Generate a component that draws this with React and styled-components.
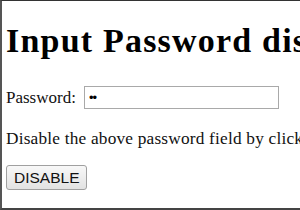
import React from "react";
import styled, { createGlobalStyle } from "styled-components";

const Global = createGlobalStyle`
  html, body { margin: 0; padding: 0; background: #fff; }
  body { font-family: "Liberation Serif", "Times New Roman", serif; color: #111; }
`;

const Frame = styled.div`
  box-sizing: border-box;
  width: 300px;
  height: 210px;
  overflow: hidden;
  border-top: 1px solid #333;
  border-left: 2px solid #555;
  border-bottom: 2px solid #444;
  padding: 0 0 0 4px;
  white-space: nowrap;
`;

const Heading = styled.h1`
  font-size: 34px;
  letter-spacing: 1.2px;
  font-weight: bold;
  margin: 21px 0 0;
  line-height: 37px;
  color: #000;
`;

const Row = styled.p`
  display: flex;
  align-items: center;
  gap: 8px;
  margin: 27px 0 0;
  font-size: 17px;
  line-height: 20px;
`;

const Field = styled.input`
  box-sizing: border-box;
  width: 195px;
  height: 23px;
  border: 1px solid #a9a9a9;
  padding: 0 4px;
  font-size: 13px;
  letter-spacing: -1px;
  outline: none;
  background: #fff;
`;

const Text = styled.p`
  margin: 20px 0 0;
  font-size: 17.3px;
  letter-spacing: 0.2px;
  line-height: 20px;
`;

const Button = styled.button`
  margin-top: 16px;
  box-sizing: border-box;
  height: 25px;
  padding: 0 7px;
  font-family: "Liberation Sans", Arial, sans-serif;
  font-size: 15.5px;
  color: #111;
  background: linear-gradient(#f8f8f8, #e2e2e2);
  border: 1px solid #a0a0a0;
  border-radius: 3px;
`;

export default function App() {
  return (
    <>
      <Global />
      <Frame>
        <Heading>Input Password disabled Property</Heading>
        <Row>
          Password: <Field type="password" defaultValue="ab" />
        </Row>
        <Text>Disable the above password field by clicking the button below.</Text>
        <Button>DISABLE</Button>
      </Frame>
    </>
  );
}
